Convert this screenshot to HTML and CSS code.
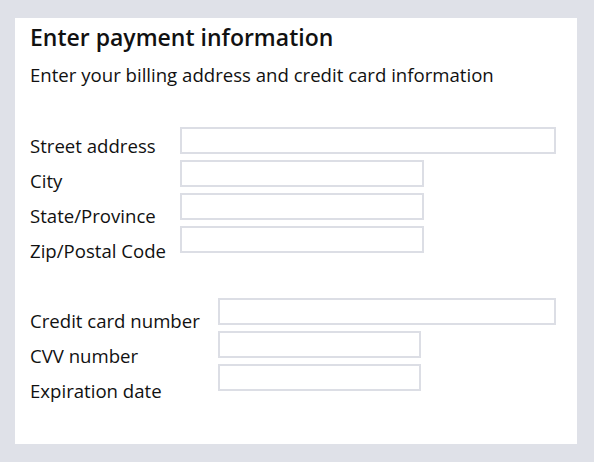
FILE: index.html
```html
<!DOCTYPE html>
<html>
<head>
<meta charset="utf-8">
<link rel="stylesheet" href="styles.css">
</head>
<body>
<div class="card">
  <h1 class="title">Enter payment information</h1>
  <p class="subtitle">Enter your billing address and credit card information</p>
  <div class="section section-address">
    <div class="labels">
      <div class="label">Street address</div>
      <div class="label">City</div>
      <div class="label">State/Province</div>
      <div class="label">Zip/Postal Code</div>
    </div>
    <div class="inputs">
      <input class="field field-wide" type="text">
      <input class="field field-mid" type="text">
      <input class="field field-mid" type="text">
      <input class="field field-mid" type="text">
    </div>
  </div>
  <div class="section section-card">
    <div class="labels">
      <div class="label">Credit card number</div>
      <div class="label">CVV number</div>
      <div class="label">Expiration date</div>
    </div>
    <div class="inputs">
      <input class="field field-cc" type="text">
      <input class="field field-short" type="text">
      <input class="field field-short" type="text">
    </div>
  </div>
</div>
</body>
</html>
```

FILE: styles.css
```css
html, body {
  margin: 0;
  padding: 0;
}
body {
  background: #dfe1e8;
  padding: 18px 17px 18px 15px;
  font-family: "Open Sans", "Noto Sans", sans-serif;
  color: #111;
}
.card {
  background: #fff;
  width: 562px;
  height: 426px;
  box-sizing: border-box;
  padding: 4px 15px 0 15px;
}
.title {
  margin: 0;
  font-size: 23px;
  font-weight: 600;
  line-height: 30px;
}
.subtitle {
  margin: 10px 0 0 0;
  font-size: 18.6px;
  line-height: 26px;
}
.section {
  display: flex;
  align-items: flex-start;
}
.section-address {
  margin-top: 39px;
}
.section-card {
  margin-top: 30px;
}
.labels {
  display: flex;
  flex-direction: column;
}
.section-address .labels {
  width: 150px;
  padding-top: 1px;
}
.section-card .labels {
  width: 188px;
  padding-top: 5px;
}
.label {
  font-size: 18.6px;
  line-height: 35px;
}
.inputs {
  display: flex;
  flex-direction: column;
  gap: 6px;
}
.field {
  display: block;
  box-sizing: border-box;
  height: 27px;
  margin: 0;
  padding: 0 6px;
  border: 2px solid #dcdee5;
  background: #fff;
  outline: none;
}
.field-wide { width: 376px; }
.field-mid { width: 244px; }
.field-cc { width: 338px; }
.field-short { width: 203px; }
```
